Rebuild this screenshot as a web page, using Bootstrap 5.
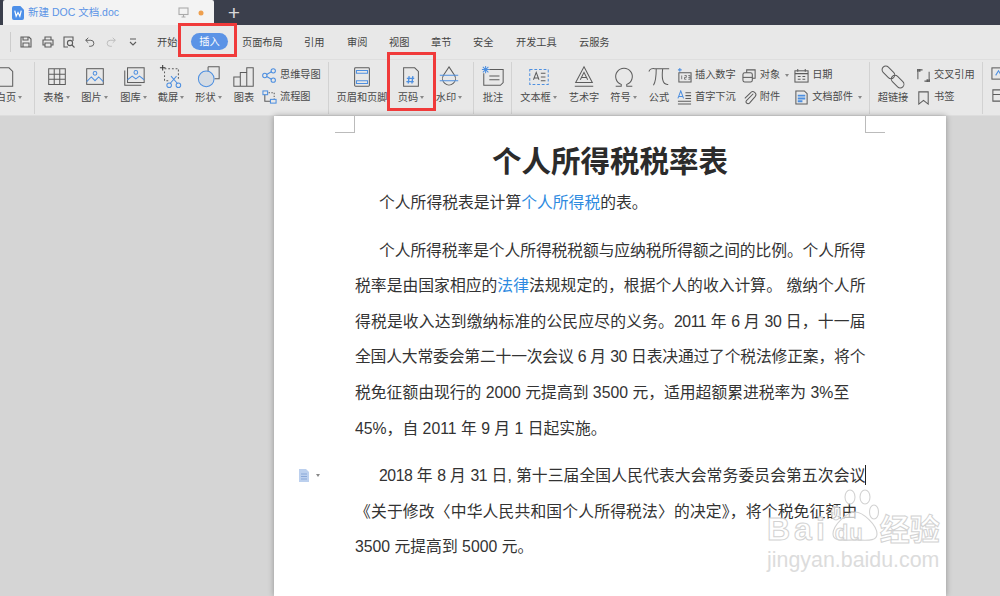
<!DOCTYPE html>
<html lang="en">
<head>
<meta charset="UTF-8">
<meta name="viewport" content="width=device-width, initial-scale=1.0">
<title>新建 DOC 文档.doc</title>
<link href="https://cdn.jsdelivr.net/npm/bootstrap@5.3.0/dist/css/bootstrap.min.css" rel="stylesheet">
<style>
html, body { height: 596px; overflow: hidden; }
body { width: 1000px; background: #d5d5d5; position: relative; font-family: "Liberation Sans", "Noto Sans CJK SC", sans-serif; color: #333; }
svg { display: block; fill: none; stroke: #5c5c5c; stroke-width: 1.1; }
svg .bl { stroke: #4d8fe0; }
.title-bar { height: 25px; background: #3b3f4c; padding-left: 3px; }
.doc-tab { width: 211px; background: #f3f3f3; color: #5b93e6; font-size: 10.5px; padding-left: 9px; border-radius: 2px 2px 0 0; }
.add-tab { width: 40px; color: #d8d8d8; font-size: 21px; font-weight: 300; line-height: 25px; text-align: center; }
.menu-bar { height: 34px; background: #e8e8e8; padding-left: 19px; }
.qa-sep { width: 1px; height: 20px; background: #ccc; position: absolute; left: 10px; top: 32px; }
.menu-item { position: absolute; top: 36px; font-size: 10.2px; color: #444; line-height: 14px; white-space: nowrap; }
.menu-active { background: #5b93e6; color: #fff; border-radius: 9px; width: 37px; height: 17px; top: 33px; line-height: 17px; text-align: center; }
.tool-bar { height: 57px; background: #e8e8e8; border-top: 1px solid #dedede; border-bottom: 1px solid #ddd; font-size: 10.2px; color: #4a4a4a; overflow: hidden; }
.tool-grp { height: 52px; margin-top: 2px; border-right: 1px solid #d2d2d2; flex: none; }
.tool-big { flex: none; display: flex; flex-direction: column; align-items: center; white-space: nowrap; }
.tool-big svg { width: 24px; height: 24px; margin-top: 3px; margin-bottom: 1px; }
.tool-col { flex: none; display: flex; flex-direction: column; gap: 6px; padding-top: 5px; white-space: nowrap; }
.tool-sm { display: flex; align-items: center; gap: 3px; height: 16px; }
.tool-sm svg { width: 15px; height: 15px; flex: none; }
.caret-mini { display: inline-block; border-top: 3px solid #888; border-left: 2.5px solid transparent; border-right: 2.5px solid transparent; margin-left: 2px; vertical-align: 2px; }
.doc-page { width: 672px; height: 480px; margin-left: 274px; background: #fff; box-shadow: 0 0 6px rgba(0,0,0,.32); padding: 27px 81px 0; position: relative; font-size: 15.8px; color: #333; }
.doc-title { font-size: 29.5px; font-weight: 700; text-align: center; line-height: 38px; margin: 0 0 4px; color: #2b2b2b; }
.doc-para { margin-bottom: 12px; }
.doc-line { height: 35.6px; line-height: 35.6px; white-space: nowrap; }
.line-fit { letter-spacing: -.45px; text-align: justify; text-align-last: justify; white-space: normal; }
.line-squeeze { letter-spacing: .15px; }
.line-ind { padding-left: 24px; }
.doc-link { color: #2d8ae0; }
.crop-l, .crop-r { position: absolute; top: 0; width: 20px; height: 17px; border-bottom: 1px solid #bbb; }
.crop-l { left: 61px; border-right: 1px solid #bbb; }
.crop-r { right: 61px; border-left: 1px solid #bbb; }
.red-box { position: absolute; border: 3px solid #f03a3a; }
.para-mark { position: absolute; left: 298px; top: 469px; }
.text-cursor { position: absolute; left: 865px; top: 465px; width: 1px; height: 20px; background: #222; }
.wm-mark { position: absolute; left: 767px; top: 513px; width: 180px; pointer-events: none; line-height: 1; }
.wm-big { position: relative; font-size: 32px; font-weight: 700; -webkit-text-stroke: 1px #d2d2d2; color: rgba(255,255,255,.85); white-space: nowrap; letter-spacing: 4px; }
.wm-du { font-size: 22px; margin-left: 6px; letter-spacing: 1px; }
.wm-cn { font-size: 30px; margin-left: 16px; letter-spacing: 0; }
.wm-url { position: relative; font-size: 21.4px; color: #dcdcdc; margin-top: 5px; white-space: nowrap; }
.wm-paw { position: absolute; left: 63px; top: -25px; stroke: #d2d2d2; }
.wm-paw ellipse, .wm-paw path { fill: rgba(255,255,255,.7); }
</style>
</head>
<body>
<div class="title-bar d-flex">
  <div class="doc-tab d-flex align-items-center gap-1">
    <svg width="12" height="14" viewBox="0 0 13 15" style="stroke:none"><path d="M2 0h7l4 4v9a2 2 0 0 1-2 2H2a2 2 0 0 1-2-2V2a2 2 0 0 1 2-2z" fill="#4d8fe8"/><path d="M3 5l1.500 6 2-4 2 4L10 5" stroke="#fff" stroke-width="1.300"/></svg>
    <span class="flex-grow-1">新建 DOC 文档.doc</span>
    <svg width="11" height="11" viewBox="0 0 11 11" style="stroke:#aaa"><rect x="1" y="1" width="9" height="6.500"/><path d="M5.500 7.500V10M3.500 10h4"/></svg>
    <svg width="6" height="6" viewBox="0 0 6 6" style="stroke:none;margin:0 10px 0 5px"><circle cx="3" cy="3" r="2.500" fill="#ee9f4d"/></svg>
  </div>
  <div class="add-tab">+</div>
</div>

<div class="menu-bar d-flex align-items-center">
  <svg width="14" height="14" viewBox="0 0 14 14"><path d="M2 2h8l2 2v8H2zM4 2v3h5V2M4 12V8h6v4"/></svg>
  <svg width="14" height="14" viewBox="0 0 14 14" style="margin-left:8px"><path d="M4 5V2h6v3M4 10H2V5h10v5h-2M4 8h6v4H4z"/></svg>
  <svg width="14" height="14" viewBox="0 0 14 14" style="margin-left:7px"><path d="M11 6V2H2v10h4"/><circle cx="8" cy="8" r="2.600"/><path d="M10 10l2.500 2.500"/></svg>
  <svg width="12" height="14" viewBox="0 0 14 14" style="margin-left:8px"><path d="M5 2L2 5l3 3M2 5h6a3.500 3.500 0 0 1 0 7H6"/></svg>
  <svg width="12" height="14" viewBox="0 0 14 14" style="stroke:#bbb;margin-left:9px"><path d="M9 2l3 3-3 3M12 5H6a3.500 3.500 0 0 0 0 7h2"/></svg>
  <svg width="10" height="10" viewBox="0 0 10 10" style="margin-left:11px"><path d="M2 2h6M2 5l3 3 3-3"/></svg>
</div>
<i class="qa-sep"></i>
<span class="menu-item" style="left:157px">开始</span>
<span class="menu-item menu-active" style="left:191px">插入</span>
<span class="menu-item" style="left:242px">页面布局</span>
<span class="menu-item" style="left:304px">引用</span>
<span class="menu-item" style="left:347px">审阅</span>
<span class="menu-item" style="left:389px">视图</span>
<span class="menu-item" style="left:431px">章节</span>
<span class="menu-item" style="left:473px">安全</span>
<span class="menu-item" style="left:516px">开发工具</span>
<span class="menu-item" style="left:579px">云服务</span>

<div class="tool-bar d-flex">
  <div class="tool-grp" style="width:35px">
    <div class="tool-big" style="width:18px">
      <svg viewBox="0 0 26 26"><path d="M0 3h13l4 4v16H0z"/></svg>
      <span>白页<i class="caret-mini"></i></span>
    </div>
  </div>
  <div class="tool-grp d-flex" style="width:294px;padding-left:8px">
    <div class="tool-big" style="width:27px"><svg viewBox="0 0 26 26"><path d="M4 4h18v17H4zM4 10h18M4 15.500h18M10 4v17M16 4v17"/></svg><span>表格<i class="caret-mini"></i></span></div>
    <div class="tool-big" style="width:27px;margin-left:11px"><svg viewBox="0 0 26 26"><rect x="4" y="4" width="18" height="17"/><circle cx="13" cy="9" r="2" class="bl"/><path class="bl" d="M4 18l5-5 4 4 4-4 5 5"/></svg><span>图片<i class="caret-mini"></i></span></div>
    <div class="tool-big" style="width:27px;margin-left:12px"><svg viewBox="0 0 26 26"><rect x="6" y="3" width="18" height="16"/><path d="M3 6v16h18"/><circle cx="15" cy="8" r="2" class="bl"/><path class="bl" d="M6 16l5-4 4 3 4-3 5 4"/></svg><span>图库<i class="caret-mini"></i></span></div>
    <div class="tool-big" style="width:28px;margin-left:10px"><svg viewBox="0 0 26 26"><path d="M6 4h15v11M6 7v10h5" stroke-dasharray="2 2"/><path d="M1 3h6M4 0v6" stroke="#333"/><circle cx="11" cy="22" r="2.500" class="bl"/><circle cx="21" cy="22" r="2.500" class="bl"/><path class="bl" d="M12 20l7-8M20 20l-7-8"/></svg><span>截屏<i class="caret-mini"></i></span></div>
    <div class="tool-big" style="width:27px;margin-left:10px"><svg viewBox="0 0 26 26"><path d="M12 2h12v13H19M12 2v5"/><circle cx="10" cy="15" r="8.500" fill="#d5dce4" class="bl"/></svg><span>形状<i class="caret-mini"></i></span></div>
    <div class="tool-big" style="width:20px;margin-left:12px"><svg viewBox="0 0 26 26"><path d="M2 13h7v10H2zM9 8h7v15H9zM16 3h7v20h-7z"/></svg><span>图表</span></div>
    <div class="tool-col" style="margin-left:8px">
      <div class="tool-sm"><svg viewBox="0 0 16 16"><g class="bl"><circle cx="3" cy="8" r="2.300"/><circle cx="12" cy="3" r="2.300"/><circle cx="12" cy="13" r="2.300"/><path d="M5 7l5-3M5 9l5 3"/></g></svg>思维导图</div>
      <div class="tool-sm"><svg viewBox="0 0 16 16"><path d="M3 5v7h6"/><path d="M7 3h6v7" stroke-dasharray="1.500 1.500"/><rect class="bl" x="1" y="1" width="5" height="4"/><rect class="bl" x="9" y="10" width="6" height="4"/></svg>流程图</div>
    </div>
  </div>
  <div class="tool-grp d-flex" style="width:145px;padding-left:7px">
    <div class="tool-big" style="width:52px"><svg viewBox="0 0 26 26"><rect x="5" y="3" width="16" height="20" rx="1"/><path class="bl" d="M7 6h12v3H7zM7 17h12v3H7z"/></svg><span>页眉和页脚</span></div>
    <div class="tool-big" style="width:30px;margin-left:8px"><svg viewBox="0 0 26 26"><path d="M5 3h12l4 4v16H5z"/><path class="bl" stroke-width="1.500" d="M11 12l-1 8M15 12l-1 8M8.500 14.500h8M8 18h8"/></svg><span>页码<i class="caret-mini"></i></span></div>
    <div class="tool-big" style="width:28px;margin-left:9px"><svg viewBox="0 0 26 26"><path d="M13 2l6 9a7 7 0 1 1-12 0z"/><path class="bl" d="M3 11h20M3 17h20"/></svg><span>水印<i class="caret-mini"></i></span></div>
  </div>
  <div class="tool-grp d-flex" style="width:38px;padding-left:8px">
    <div class="tool-big" style="width:22px"><svg viewBox="0 0 26 26"><path d="M9 5h15v14l-3 3H3V9"/><path d="M9 12h11M9 16h11"/><path class="bl" d="M5 1v8M1 5h8M2 2l6 6M8 2L2 8"/></svg><span>批注</span></div>
  </div>
  <div class="tool-grp d-flex" style="width:358px;padding-left:8px">
    <div class="tool-big" style="width:37px"><svg viewBox="0 0 26 26"><path class="bl" stroke-dasharray="3 2" d="M3 5h20v16H3z"/><path d="M7 16l3-8 3 8M8 14h4M15 9h5M15 13h5M15 17h5"/></svg><span>文本框<i class="caret-mini"></i></span></div>
    <div class="tool-big" style="width:32px;margin-left:11px"><svg viewBox="0 0 26 26"><path d="M13 2l9 17H4zM3 23h20"/><path d="M9 16l4-8 4 8M10.500 13.500h5"/></svg><span>艺术字</span></div>
    <div class="tool-big" style="width:27px;margin-left:10px"><svg viewBox="0 0 26 26"><path d="M4 23h6v-2a9 9 0 1 1 6 0v2h6"/></svg><span>符号<i class="caret-mini"></i></span></div>
    <div class="tool-big" style="width:22px;margin-left:11px"><svg viewBox="0 0 26 26"><path d="M2 7c2-4 4-3 8-3h14M10 4c0 8 0 13-3 18M17 4c-1 8-1 18 6 17"/></svg><span>公式</span></div>
    <div class="tool-col" style="margin-left:7px">
      <div class="tool-sm"><svg viewBox="0 0 16 16"><path d="M2 5h13v10H2z"/><path class="bl" d="M3 0v4M1 2h4"/><path d="M5 8v4M8 8h2v2H8v2h2M12 8h2v4h-2M12 10h2" stroke-width=".8"/></svg>插入数字</div>
      <div class="tool-sm"><svg viewBox="0 0 16 16"><path class="bl" d="M1 9l3-8 3 8M2 7h4"/><path d="M1 12h14M1 15h14M9 3h6M9 6h6M9 9h6"/></svg>首字下沉</div>
    </div>
    <div class="tool-col" style="margin-left:6px">
      <div class="tool-sm"><svg viewBox="0 0 16 16"><path d="M5 5V2h9v9h-3"/><rect x="1" y="5" width="10" height="10" rx="2"/><path d="M1 10h10"/></svg>对象<i class="caret-mini"></i></div>
      <div class="tool-sm"><svg viewBox="0 0 16 16"><path d="M12 4L5 11a2 2 0 0 0 3 3l6-7a3 3 0 0 0-5-4L3 9"/></svg>附件</div>
    </div>
    <div class="tool-col" style="margin-left:5px">
      <div class="tool-sm"><svg viewBox="0 0 16 16"><rect x="1" y="3" width="14" height="12"/><path d="M4 1v3M12 1v3M1 6h14M4 9h3M9 9h3M4 12h3M9 12h3"/></svg>日期</div>
      <div class="tool-sm"><svg viewBox="0 0 16 16"><path d="M2 1h9l3 3v11H2z"/><path class="bl" stroke-width="2" d="M4 6h8M4 9h8M4 12h5"/></svg>文档部件<i class="caret-mini"></i></div>
    </div>
  </div>
  <div class="tool-grp d-flex" style="width:113px;padding-left:8px">
    <div class="tool-big" style="width:30px"><svg viewBox="0 0 26 26"><rect x="0" y="4" width="16" height="8" rx="4" transform="rotate(45 8 8)"/><rect x="10" y="14" width="16" height="8" rx="4" transform="rotate(45 18 18)"/></svg><span>超链接</span></div>
    <div class="tool-col" style="margin-left:8px">
      <div class="tool-sm"><svg viewBox="0 0 16 16"><path d="M7 2H2v10M9 14h5V4"/><path d="M2 1v3M4 1v3M12 12v3M14 12v3" stroke-width="1.500"/></svg>交叉引用</div>
      <div class="tool-sm"><svg viewBox="0 0 16 16"><path d="M3 2h10v13l-5-4-5 4z"/></svg>书签</div>
    </div>
  </div>
  <div class="tool-col flex-grow-1" style="padding-left:8px">
    <div class="tool-sm"><svg viewBox="0 0 16 16"><rect x="1" y="2" width="14" height="12"/><path class="bl" d="M5 10l3-5 3 5"/></svg></div>
    <div class="tool-sm"><svg viewBox="0 0 16 16"><path d="M2 2h14v12H2zM2 7h14"/></svg></div>
  </div>
</div>

<div class="doc-page">
  <i class="crop-l"></i><i class="crop-r"></i>
  <h1 class="doc-title">个人所得税税率表</h1>
  <div class="doc-para">
    <div class="doc-line line-ind">个人所得税表是计算<span class="doc-link">个人所得税</span>的表。</div>
  </div>
  <div class="doc-para">
    <div class="doc-line line-fit line-ind">个人所得税率是个人所得税税额与应纳税所得额之间的比例。个人所得</div>
    <div class="doc-line line-fit">税率是由国家相应的<span class="doc-link">法律</span>法规规定的，根据个人的收入计算。 缴纳个人所</div>
    <div class="doc-line line-fit">得税是收入达到缴纳标准的公民应尽的义务。2011 年 6 月 30 日，十一届</div>
    <div class="doc-line line-fit">全国人大常委会第二十一次会议 6 月 30 日表决通过了个税法修正案，将个</div>
    <div class="doc-line">税免征额由现行的 2000 元提高到 3500 元，适用超额累进税率为 3%至</div>
    <div class="doc-line">45%，自 2011 年 9 月 1 日起实施。</div>
  </div>
  <div class="doc-para">
    <div class="doc-line line-fit line-ind">2018 年 8 月 31 日, 第十三届全国人民代表大会常务委员会第五次会议</div>
    <div class="doc-line line-squeeze">《关于修改〈中华人民共和国个人所得税法〉的决定》，将个税免征额由</div>
    <div class="doc-line">3500 元提高到 5000 元。</div>
  </div>
</div>
<i class="text-cursor"></i>

<div class="para-mark d-flex align-items-center gap-1">
  <svg width="12" height="13" viewBox="0 0 12 13" style="stroke:none"><path d="M1 0h7l3 3v10H1z" fill="#bcd0ee"/><path d="M3 5h6M3 7.500h6M3 10h6" stroke="#8aa8d8"/></svg>
  <i class="caret-mini"></i>
</div>

<div class="red-box" style="left:178px;top:23px;width:59px;height:34px"></div>
<div class="red-box" style="left:387px;top:52px;width:49px;height:59px"></div>

<div class="wm-mark">
  <svg class="wm-paw" width="52" height="56" viewBox="0 0 52 56"><ellipse cx="20" cy="9" rx="5" ry="7"/><ellipse cx="35" cy="9" rx="5" ry="7"/><ellipse cx="6" cy="25" rx="4.500" ry="7"/><ellipse cx="44" cy="24" rx="4.500" ry="7"/><path d="M25 24c8 0 22 13 22 22 0 8-11 6-22 6-11 0-22 2-22-6 0-9 14-22 22-22z"/></svg>
  <div class="wm-big">Bai<span class="wm-du">du</span><span class="wm-cn">经验</span></div>
  <div class="wm-url">jingyan.baidu.com</div>
</div>
<script src="https://cdn.jsdelivr.net/npm/bootstrap@5.3.0/dist/js/bootstrap.bundle.min.js"></script>
</body>
</html>
